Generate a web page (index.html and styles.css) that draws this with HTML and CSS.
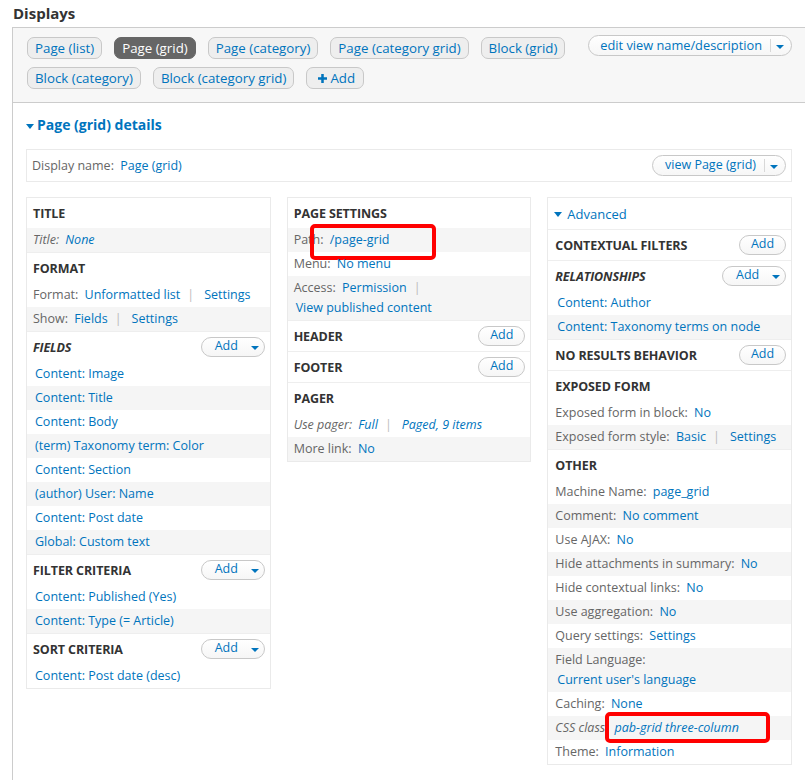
FILE: index.html
```html
<!DOCTYPE html>
<html>
<head>
<meta charset="utf-8">
<link rel="stylesheet" href="styles.css">
</head>
<body>
<h2 class="page-title">Displays</h2>
<div class="views-box">
  <div class="tabs-bar">
    <ul class="tabs">
      <li><a class="tab">Page (list)</a></li>
      <li><a class="tab active">Page (grid)</a></li>
      <li><a class="tab">Page (category)</a></li>
      <li><a class="tab">Page (category grid)</a></li>
      <li><a class="tab">Block (grid)</a></li>
      <li><a class="tab">Block (category)</a></li>
      <li><a class="tab">Block (category grid)</a></li>
      <li><a class="tab tab-add"><svg class="plus" viewBox="0 0 10 10" width="9" height="9"><path d="M3.6 0h2.8v3.6H10v2.8H6.4V10H3.6V6.4H0V3.6h3.6z" fill="#0074bd"/></svg>Add</a></li>
    </ul>
    <div class="dropbutton big">
      <a class="db-link">edit view name/description</a>
      <span class="db-sep"></span>
      <span class="db-caret"></span>
    </div>
  </div>

  <div class="details">
    <h3 class="details-title"><span class="caret"></span>Page (grid) details</h3>
    <div class="display-name">
      <div class="dn-text"><span class="label">Display name:</span> <a class="link">Page (grid)</a></div>
      <div class="dropbutton big">
        <a class="db-link">view Page (grid)</a>
        <span class="db-sep"></span>
        <span class="db-caret"></span>
      </div>
    </div>

    <div class="columns">
      <div class="col">
        <div class="sec-head first"><span>TITLE</span></div>
        <div class="row even italic"><span class="label">Title:</span> <a class="link">None</a></div>
        <div class="sec-head"><span>FORMAT</span></div>
        <div class="row"><span class="label">Format:</span> <a class="link">Unformatted list</a><span class="pipe">|</span><a class="link">Settings</a></div>
        <div class="row even"><span class="label">Show:</span> <a class="link">Fields</a><span class="pipe">|</span><a class="link">Settings</a></div>
        <div class="sec-head"><span class="italic">FIELDS</span>
          <div class="dropbutton small"><a class="db-link">Add</a><span class="db-sep"></span><span class="db-caret"></span></div>
        </div>
        <div class="row"><a class="link item">Content: Image</a></div>
        <div class="row even"><a class="link item">Content: Title</a></div>
        <div class="row"><a class="link item">Content: Body</a></div>
        <div class="row even"><a class="link item">(term) Taxonomy term: Color</a></div>
        <div class="row"><a class="link item">Content: Section</a></div>
        <div class="row even"><a class="link item">(author) User: Name</a></div>
        <div class="row"><a class="link item">Content: Post date</a></div>
        <div class="row even"><a class="link item">Global: Custom text</a></div>
        <div class="sec-head"><span>FILTER CRITERIA</span>
          <div class="dropbutton small"><a class="db-link">Add</a><span class="db-sep"></span><span class="db-caret"></span></div>
        </div>
        <div class="row"><a class="link item">Content: Published (Yes)</a></div>
        <div class="row even"><a class="link item">Content: Type (= Article)</a></div>
        <div class="sec-head"><span>SORT CRITERIA</span>
          <div class="dropbutton small"><a class="db-link">Add</a><span class="db-sep"></span><span class="db-caret"></span></div>
        </div>
        <div class="row"><a class="link item">Content: Post date (desc)</a></div>
      </div>

      <div class="col">
        <div class="sec-head first"><span>PAGE SETTINGS</span></div>
        <div class="row even marked"><span class="label">Path:</span> <a class="link">/page-grid</a><span class="mark mark-path"></span></div>
        <div class="row"><span class="label">Menu:</span> <a class="link">No menu</a></div>
        <div class="row even"><span class="label">Access:</span> <a class="link">Permission</a><span class="pipe">|</span><br><a class="link item">View published content</a></div>
        <div class="sec-head"><span>HEADER</span>
          <div class="dropbutton single"><a class="db-link">Add</a></div>
        </div>
        <div class="sec-head"><span>FOOTER</span>
          <div class="dropbutton single"><a class="db-link">Add</a></div>
        </div>
        <div class="sec-head"><span>PAGER</span></div>
        <div class="row italic"><span class="label">Use pager:</span> <a class="link">Full</a><span class="pipe">|</span><a class="link">Paged, 9 items</a></div>
        <div class="row even"><span class="label">More link:</span> <a class="link">No</a></div>
      </div>

      <div class="col col3">
        <div class="adv-head"><span class="caret"></span>Advanced</div>
        <div class="sec-head"><span>CONTEXTUAL FILTERS</span>
          <div class="dropbutton single"><a class="db-link">Add</a></div>
        </div>
        <div class="sec-head"><span class="italic">RELATIONSHIPS</span>
          <div class="dropbutton small"><a class="db-link">Add</a><span class="db-sep"></span><span class="db-caret"></span></div>
        </div>
        <div class="row"><a class="link item">Content: Author</a></div>
        <div class="row even"><a class="link item">Content: Taxonomy terms on node</a></div>
        <div class="sec-head"><span>NO RESULTS BEHAVIOR</span>
          <div class="dropbutton single"><a class="db-link">Add</a></div>
        </div>
        <div class="sec-head"><span>EXPOSED FORM</span></div>
        <div class="row"><span class="label">Exposed form in block:</span> <a class="link">No</a></div>
        <div class="row even"><span class="label">Exposed form style:</span> <a class="link">Basic</a><span class="pipe">|</span><a class="link">Settings</a></div>
        <div class="sec-head"><span>OTHER</span></div>
        <div class="row"><span class="label">Machine Name:</span> <a class="link">page_grid</a></div>
        <div class="row even"><span class="label">Comment:</span> <a class="link">No comment</a></div>
        <div class="row"><span class="label">Use AJAX:</span> <a class="link">No</a></div>
        <div class="row even"><span class="label">Hide attachments in summary:</span> <a class="link">No</a></div>
        <div class="row"><span class="label">Hide contextual links:</span> <a class="link">No</a></div>
        <div class="row even"><span class="label">Use aggregation:</span> <a class="link">No</a></div>
        <div class="row"><span class="label">Query settings:</span> <a class="link">Settings</a></div>
        <div class="row even"><span class="label">Field Language:</span><br><a class="link item">Current user's language</a></div>
        <div class="row"><span class="label">Caching:</span> <a class="link">None</a></div>
        <div class="row even italic marked"><span class="label">CSS class:</span> <a class="link">pab-grid three-column</a><span class="mark mark-css"></span></div>
        <div class="row"><span class="label">Theme:</span> <a class="link">Information</a></div>
      </div>
    </div>
  </div>
</div>
</body>
</html>
```

FILE: styles.css
```css
html, body {
  margin: 0;
  padding: 0;
  overflow: hidden;
  background: #fff;
}
body {
  font-family: "Open Sans", "Noto Sans", "DejaVu Sans", sans-serif;
  font-size: 12.5px;
  color: #333;
  width: 805px;
  height: 780px;
}
a { text-decoration: none; cursor: pointer; }

.page-title {
  margin: 0;
  padding: 3px 13px 4px;
  font-size: 15px;
  line-height: 20px;
  font-weight: 700;
  color: #333;
}

.views-box {
  margin-left: 12px;
  border: 1px solid #ccc;
  border-right: none;
  border-bottom: none;
  min-height: 760px;
}

.tabs-bar {
  display: flex;
  align-items: flex-start;
  background: #f7f7f7;
  border-bottom: 1px solid #ccc;
  padding: 9px 13px 13px 14px;
}
.tabs {
  list-style: none;
  margin: 0;
  padding: 0;
  display: flex;
  flex-wrap: wrap;
  column-gap: 12px;
  row-gap: 8px;
  width: 560px;
}
.tab {
  display: block;
  height: 20px;
  line-height: 20px;
  padding: 0 7px;
  border: 1px solid #c8c8c8;
  border-radius: 7px;
  background: #eeeeee;
  color: #0074bd;
  font-size: 13.3px;
}
.tab.active {
  background: #666;
  border-color: #666;
  color: #fff;
}
.tab-add { display: flex; align-items: center; gap: 3px; padding: 0 8px 0 11px; }
.plus { display: block; }

.dropbutton {
  display: flex;
  align-items: center;
  border: 1px solid #c8c8c8;
  border-radius: 11px;
  background: linear-gradient(#ffffff, #f6f6f6);
  height: 18px;
  flex-shrink: 0;
}
.dropbutton.big { height: 19px; margin-left: auto; }
.tabs-bar .dropbutton.big { margin-top: -2px; font-size: 12.8px; }
.tabs-bar .dropbutton.big .db-link { padding-left: 11px; }
.db-link {
  color: #0074bd;
  padding: 0 8px 0 12px;
  line-height: 16px;
  margin-top: -2px;
}
.db-sep {
  width: 1px;
  height: 13px;
  background: #d8d8d8;
}
.db-caret {
  width: 0;
  height: 0;
  border-left: 4px solid transparent;
  border-right: 4px solid transparent;
  border-top: 4px solid #0074bd;
  margin: 2px 7px 0 5px;
}
.dropbutton.small { width: 62px; margin-left: auto; }
.dropbutton.small .db-link { padding: 0 8px 0 13px; }
.dropbutton.single { margin-left: auto; width: 45px; justify-content: center; }
.dropbutton.single .db-link { padding: 0; }

.details {
  padding: 12px 13px 0 13px;
}
.details-title {
  margin: 0 0 14px;
  font-size: 14px;
  line-height: 20px;
  font-weight: 700;
  color: #0074bd;
  display: flex;
  align-items: center;
}
.caret {
  display: inline-block;
  width: 0;
  height: 0;
  border-left: 4px solid transparent;
  border-right: 4px solid transparent;
  border-top: 5px solid #0074bd;
  margin-right: 3px;
  margin-top: 2px;
}

.display-name {
  display: flex;
  align-items: center;
  border: 1px solid #eaeaea;
  height: 31px;
  padding: 0 5px 0 5px;
}
.dn-text { line-height: 20px; }

.label { color: #666; }
.link { color: #0074bd; }
.label + .link { margin-left: 3px; }
.pipe { color: #bbb; margin: 0 10px 0 7px; }
.italic, .italic .label, .italic .link { font-style: italic; }

.columns {
  display: grid;
  grid-template-columns: 1fr 1fr 1fr;
  column-gap: 16px;
  margin-top: 15px;
  align-items: start;
}
.col {
  border: 1px solid #eaeaea;
}

.sec-head {
  display: flex;
  align-items: center;
  height: 30px;
  padding: 0 5px 0 6px;
  border-top: 1px solid #eeeeee;
  font-weight: 700;
  color: #333;
  font-size: 12.5px;
  letter-spacing: -0.1px;
}
.sec-head.first { border-top: none; }
.sec-head .dropbutton { font-weight: 400; letter-spacing: 0; }

.row {
  position: relative;
  padding: 2px 8px 2px 6px;
  line-height: 20px;
}
.row.even { background: #f5f5f5; }
.item { padding-left: 2px; }

.col3 .sec-head { padding-left: 7px; }
.col3 .row { padding-left: 7px; }
.adv-head {
  height: 31px;
  display: flex;
  align-items: center;
  padding-left: 6px;
  color: #0074bd;
  font-size: 13px;
}
.adv-head .caret { margin-right: 5px; }

.mark {
  position: absolute;
  border: 4px solid #f00;
  border-radius: 5px;
  box-sizing: border-box;
}
.mark-path { left: 22px; top: -4px; width: 126px; height: 36px; }
.mark-css { left: 57px; top: -4px; width: 165px; height: 31px; }
```
